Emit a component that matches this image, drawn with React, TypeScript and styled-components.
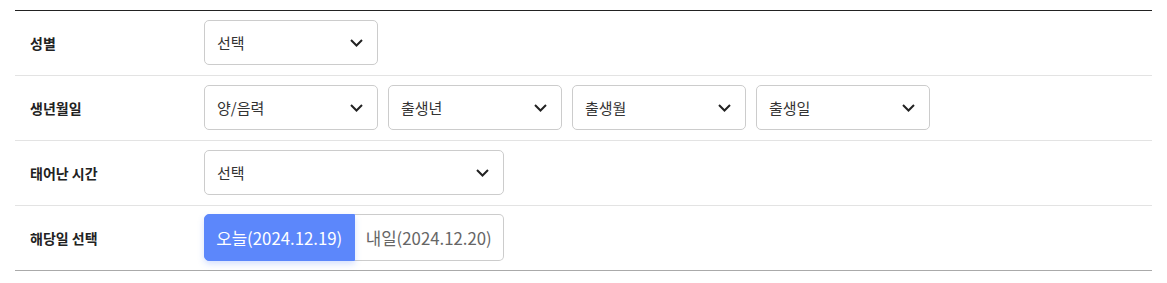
import styled, { createGlobalStyle } from 'styled-components';

const GlobalStyle = createGlobalStyle`
    body {
        margin: 0;
        background: #fff;
        font-family: 'Noto Sans CJK KR', 'Noto Sans', sans-serif;
        color: #333;
    }
`;

const StyledForm = styled.div`
    margin: 10px 15px 0;
    border-top: 1px solid #222;
    border-bottom: 1px solid #aaa;
`;

const StyledRow = styled.div`
    display: flex;
    align-items: center;
    height: 63px;
    padding-bottom: 1px;
    border-top: 1px solid #e3e3e3;

    &:first-child {
        border-top: none;
    }
`;

const StyledLabel = styled.div`
    width: 189px;
    flex-shrink: 0;
    box-sizing: border-box;
    padding-left: 15px;
    font-size: 14px;
    font-weight: 700;
    color: #222;
`;

const StyledFields = styled.div`
    display: flex;
    gap: 10px;
`;

const StyledSelect = styled.div<{ $width: number }>`
    display: flex;
    align-items: center;
    justify-content: space-between;
    box-sizing: border-box;
    width: ${(p) => p.$width}px;
    height: 45px;
    padding: 0 14px 0 12px;
    border: 1px solid #ccc;
    border-radius: 5px;
    background: #fff;
    font-size: 15px;
    color: #333;
`;

const StyledToggle = styled.div`
    display: flex;
    width: 300px;
    height: 47px;
`;

const StyledToggleButton = styled.button<{ $active?: boolean }>`
    flex: 1;
    margin: 0;
    box-sizing: border-box;
    font-family: inherit;
    font-size: 16.8px;
    padding: 0;
    cursor: pointer;
    white-space: nowrap;
    background: ${(p) => (p.$active ? '#5c87fb' : '#fff')};
    color: ${(p) => (p.$active ? '#fff' : '#666')};
    border: 1px solid ${(p) => (p.$active ? '#5c87fb' : '#ccc')};
    border-radius: ${(p) => (p.$active ? '5px 0 0 5px' : '0 5px 5px 0')};
    border-left-width: ${(p) => (p.$active ? '1px' : '0')};
    box-shadow: ${(p) => (p.$active ? '0 3px 6px rgba(92, 135, 251, 0.25)' : 'none')};
    position: relative;
    z-index: ${(p) => (p.$active ? 1 : 0)};
`;

const Chevron = () => (
    <svg width="13" height="8" viewBox="0 0 13 8" fill="none">
        <path d="M1 1l5.5 5.5L12 1" stroke="#222" strokeWidth="2" />
    </svg>
);

const Select = ({ label, width = 174 }: { label: string; width?: number }) => (
    <StyledSelect $width={width}>
        <span>{label}</span>
        <Chevron />
    </StyledSelect>
);

const App = () => (
    <>
        <GlobalStyle />
        <StyledForm>
            <StyledRow>
                <StyledLabel>성별</StyledLabel>
                <StyledFields>
                    <Select label="선택" />
                </StyledFields>
            </StyledRow>
            <StyledRow>
                <StyledLabel>생년월일</StyledLabel>
                <StyledFields>
                    <Select label="양/음력" />
                    <Select label="출생년" />
                    <Select label="출생월" />
                    <Select label="출생일" />
                </StyledFields>
            </StyledRow>
            <StyledRow>
                <StyledLabel>태어난 시간</StyledLabel>
                <StyledFields>
                    <Select label="선택" width={300} />
                </StyledFields>
            </StyledRow>
            <StyledRow>
                <StyledLabel>해당일 선택</StyledLabel>
                <StyledToggle>
                    <StyledToggleButton $active>오늘(2024.12.19)</StyledToggleButton>
                    <StyledToggleButton>내일(2024.12.20)</StyledToggleButton>
                </StyledToggle>
            </StyledRow>
        </StyledForm>
    </>
);

export default App;
